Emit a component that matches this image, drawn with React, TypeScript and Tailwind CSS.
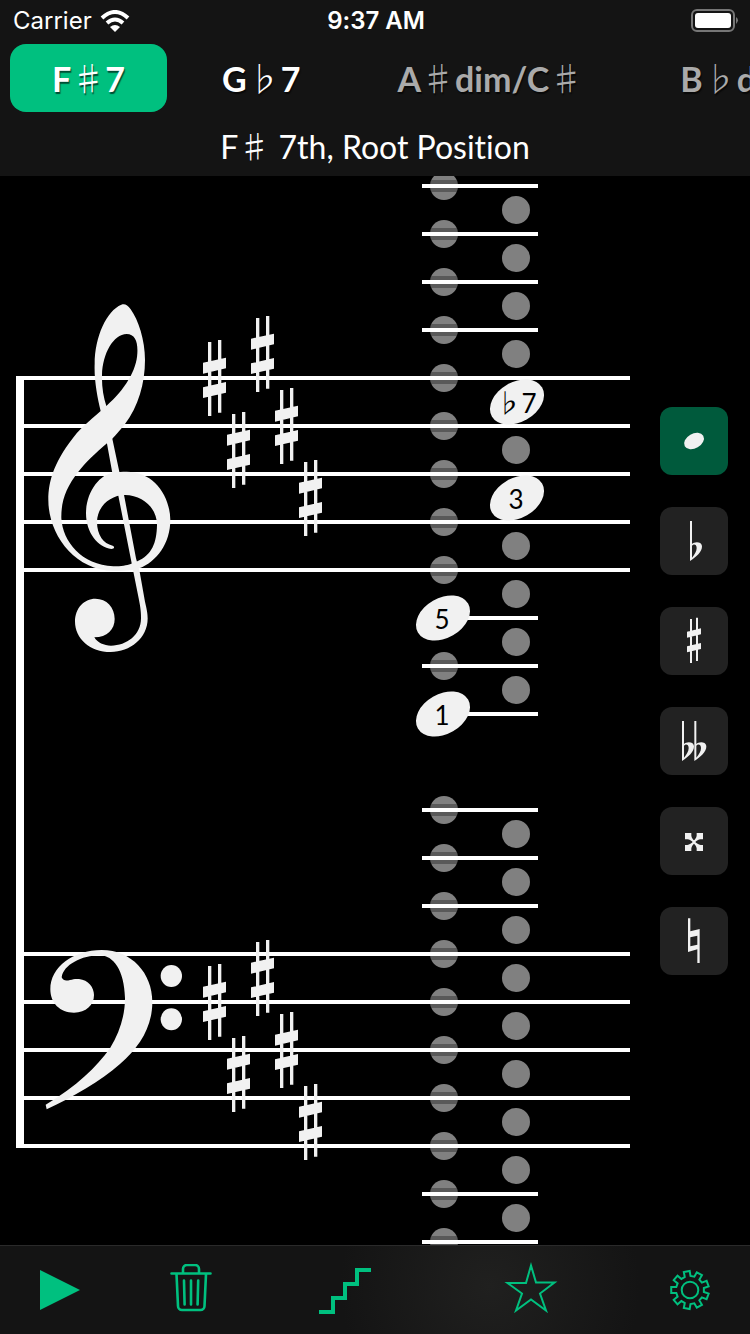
import { useState } from 'react';
import type { ReactNode } from 'react';

const CHORDS = [
  { name: 'F♯7', dimmed: false },
  { name: 'G♭7', dimmed: false },
  { name: 'A♯dim/C♯', dimmed: true },
  { name: 'B♭dim/D♭', dimmed: true },
];

// Canvas geometry: one staff step is half a line gap
const LINE_GAP = 48;
const TREBLE_TOP = 202;
const BASS_TOP = 778;

const STAFF_LINES = [0, 1, 2, 3, 4].flatMap((i) => [TREBLE_TOP + i * LINE_GAP, BASS_TOP + i * LINE_GAP]);
const LEDGER_LINES = [10, 58, 106, 154, 442, 490, 538, 634, 682, 730, 1018, 1066];

const LINE_DOTS = [
  10, 58, 106, 154, 202, 250, 298, 346, 394, 490, 634, 682, 730, 778, 826, 874, 922, 970, 1018, 1066,
];
const SPACE_DOTS = [34, 82, 130, 178, 274, 370, 418, 466, 514, 658, 706, 754, 802, 850, 898, 946, 994, 1042];

const NOTES = [
  { label: '♭7', x: 517, y: 226 },
  { label: '3', x: 517, y: 322 },
  { label: '5', x: 443, y: 442 },
  { label: '1', x: 443, y: 538 },
];

const KEY_SHARPS = [
  { x: 203, y: 164 },
  { x: 227, y: 236 },
  { x: 251, y: 140 },
  { x: 275, y: 212 },
  { x: 299, y: 284 },
];

// Splits out the accidentals, they are set in a lighter and wider face
function ChordText({ text }: { text: string }) {
  return (
    <>
      {text.split(/([♯♭])/).map((part, i) =>
        part === '♯' || part === '♭' ? (
          <span key={i} className="font-['Noto_Sans_CJK_JP',sans-serif] font-light leading-none">
            {part}
          </span>
        ) : (
          part
        )
      )}
    </>
  );
}

function TrebleClef() {
  return (
    <svg x="10" y="114" width="200" height="380" viewBox="0 0 600 1140" fill="#f1f1f1">
      <path
        fillRule="evenodd"
        d="M272 363C262 320 252 270 254 222C254 140 290 62 334 44C344 40 352 44 362 58C385 90 405 150 405 210C405 280 385 350 345 402C335 415 320 432 306 447L291 460C255 490 225 520 205 545C170 590 153 630 154 685C158 755 215 825 310 829C335 829 350 826 362 822L382 814C425 795 440 760 441 705C441 655 400 616 345 615C300 615 262 650 261 695C261 735 280 760 308 767C315 770 313 777 304 777C265 772 228 730 228 670C228 605 270 552 310 549C325 546 335 545 350 545C430 545 480 615 481 690C481 760 440 815 388 835C370 841 340 844 310 843C190 840 115 730 115 630C115 570 135 510 200 430C225 402 250 383 272 363ZM289 348C280 320 275 290 276 255C278 190 310 133 350 132C375 132 384 155 382 190C380 240 345 300 289 348Z"
      />
      <path d="M289 450L306 442L328 545L344 625L378 805L389 845L405 935C412 965 413 975 413 985C413 1045 360 1086 302 1086C240 1086 195 1045 195 995C195 955 222 926 256 926C290 926 314 952 314 987C314 1018 292 1042 253 1042C262 1058 282 1067 303 1067C350 1067 393 1035 393 985C393 960 390 945 384 915L369 840L325 617L307 549Z" />
    </svg>
  );
}

function BassClef() {
  return (
    <svg x="10" y="754" width="200" height="230" viewBox="0 0 600 690" fill="#f1f1f1">
      <path d="M107 524C200 470 260 410 300 355C330 305 345 255 345 205C343 120 310 77 270 76C215 76 160 105 155 142C160 155 172 152 180 150C190 147 197 146 207 147C235 150 252 172 252 195C252 225 228 248 192 248C150 248 121 220 121 178C121 110 190 61 275 60C365 60 427 130 427 215C427 290 390 350 330 402C270 455 190 500 110 538Z" />
      <ellipse cx="484" cy="138" rx="32" ry="33" />
      <ellipse cx="484" cy="268" rx="32" ry="33" />
    </svg>
  );
}

function KeySharp({ x, y }: { x: number; y: number }) {
  return (
    <svg x={x} y={y} width="24" height="76" viewBox="0 0 72 228" fill="#f1f1f1">
      <path d="M15 6h10v222h-10zM45 0h10v218h-10zM0 68L69 53V85L0 101zM0 142L69 126V158L0 174z" />
    </svg>
  );
}

function StaffCanvas() {
  return (
    <svg viewBox="0 0 640 1069" className="block min-w-0 flex-1" role="img" aria-label="Grand staff">
      {[...LINE_DOTS.map((y) => ({ x: 444, y })), ...SPACE_DOTS.map((y) => ({ x: 516, y }))].map((dot) => (
        <circle key={`${dot.x}-${dot.y}`} cx={dot.x} cy={dot.y} r="14" fill="#808080" />
      ))}
      {LINE_DOTS.map((y) => (
        <rect key={y} x="430" y={y - 6} width="28" height="12" fill="#000" fillOpacity="0.3" />
      ))}

      <rect x="16" y="200" width="8" height="772" fill="#fff" />
      {STAFF_LINES.map((y) => (
        <rect key={y} x="16" y={y - 2} width="614" height="4" fill="#fff" />
      ))}
      {LEDGER_LINES.map((y) => (
        <rect key={y} x="422" y={y - 2} width="116" height="4" fill="#fff" />
      ))}

      <TrebleClef />
      <BassClef />
      {KEY_SHARPS.map(({ x, y }) => (
        <g key={x}>
          <KeySharp x={x} y={y} />
          <KeySharp x={x} y={y + 624} />
        </g>
      ))}

      {NOTES.map((note) => (
        <g key={note.label}>
          <ellipse
            cx={note.x}
            cy={note.y}
            rx="29"
            ry="20"
            fill="#f1f1f1"
            transform={`rotate(-30 ${note.x} ${note.y})`}
          />
          <text
            x={note.x - 1}
            y={note.y + 11}
            textAnchor="middle"
            className="fill-black font-['Lato','Noto_Sans_CJK_JP',sans-serif] text-[26px]"
          >
            {note.label}
          </text>
        </g>
      ))}
    </svg>
  );
}

const FLAT =
  'M90 42h6V111C102 104 124 102 126 117C127 135 108 150 90 162zM96 116V152C104 142 110 133 110 123C110 112 101 110 96 116z';

const TOOLS: { id: string; icon: ReactNode }[] = [
  { id: 'Note', icon: <ellipse cx="102" cy="102" rx="32" ry="22" transform="rotate(-30 102 102)" /> },
  { id: 'Flat', icon: <path fillRule="evenodd" d={FLAT} /> },
  {
    id: 'Sharp',
    icon: <path d="M90 36h6v132h-6zM108 32h6v130h-6zM81 74L123 64V82L81 92zM81 118L123 108V126L81 136z" />,
  },
  {
    id: 'Double flat',
    icon: (
      <>
        <path fillRule="evenodd" d={FLAT} transform="translate(-24 0)" />
        <path fillRule="evenodd" d={FLAT} transform="translate(13 0)" />
      </>
    ),
  },
  {
    id: 'Double sharp',
    icon: (
      <path d="M75 78H94V86C95 92 98 96 102 100C106 96 109 92 110 86V78H129V97H122C115 98 110 101 106 105C110 109 115 113 122 114H129V132H110V124C109 118 106 114 102 110C98 114 95 118 94 124V132H75V114H82C89 113 94 109 98 105C94 101 89 98 82 97H75z" />
    ),
  },
  {
    id: 'Natural',
    icon: (
      <path
        fillRule="evenodd"
        d="M84 34H91V73L119 66V168H112V127L84 135zM91 91V118L112 113V86z"
      />
    ),
  },
];

// Nine-tooth cog, traced clockwise around a 44x44 box
const GEAR_POINTS = Array.from({ length: 9 }, (_, i) => {
  const base = 180 + i * 40;
  return [
    [-12, 14],
    [-9, 19],
    [9, 19],
    [12, 14],
  ].map(([offset, radius]) => {
    const angle = ((base + offset) * Math.PI) / 180;
    return `${(22 + radius * Math.cos(angle)).toFixed(2)},${(22 + radius * Math.sin(angle)).toFixed(2)}`;
  });
})
  .flat()
  .join(' ');

const ACTIONS: { id: string; icon: ReactNode }[] = [
  {
    id: 'Play',
    icon: (
      <svg width="40" height="40" viewBox="0 0 40 40" fill="currentColor">
        <path d="M0 0L40 20L0 40z" />
      </svg>
    ),
  },
  {
    id: 'Clear',
    icon: (
      <svg width="42" height="52" viewBox="0 0 42 52" fill="none" stroke="currentColor" strokeWidth="2.6" strokeLinecap="round">
        <path d="M1.5 9.5h39M13 9V5a4 4 0 0 1 4-4h8a4 4 0 0 1 4 4v4M6.5 10l1.5 32a4 4 0 0 0 4 4h18.500a4 4 0 0 0 4-4l1.5-32" />
        <path d="M14 16.500l.6 24M21 16.500v24M28.200 16.500l-.6 24" />
      </svg>
    ),
  },
  {
    id: 'Inversions',
    icon: (
      <svg width="52" height="48" viewBox="0 0 52 48" fill="none" stroke="currentColor" strokeWidth="4">
        <path d="M0 46H14V32H26V18H38V4H52" />
      </svg>
    ),
  },
  {
    id: 'Favorites',
    icon: (
      <svg
        className="overflow-visible"
        width="56"
        height="52"
        viewBox="0 0 56 52"
        fill="none"
        stroke="currentColor"
        strokeWidth="2"
      >
        <path d="M28 1.500L33 18.500H51.500L37 29.500L43 46.500L28 35.500L13 46.500L19 29.500L4.500 19H23z" />
      </svg>
    ),
  },
  {
    id: 'Settings',
    icon: (
      <svg width="44" height="44" viewBox="0 0 44 44" fill="none" stroke="currentColor" strokeWidth="2">
        <polygon points={GEAR_POINTS} />
        <circle cx="22" cy="22" r="8.300" />
      </svg>
    ),
  },
];

function StatusBar() {
  return (
    <div className="grid h-10 grid-cols-3 items-center pt-px pr-[11px] pl-[13px] font-['Inter',sans-serif] text-2xl text-white">
      <div className="flex items-center gap-2">
        <span>Carrier</span>
        <svg width="30" height="22" viewBox="0 0 30 22" fill="none" stroke="#fff" strokeWidth="4">
          <path d="M2 8Q15 -4 28 8" />
          <path d="M7 13Q15 6 23 13" />
          <path d="M15 22L10 17Q15 13 20 17z" fill="#fff" stroke="none" />
        </svg>
      </div>
      <span className="text-center font-semibold">9:37 AM</span>
      <svg className="justify-self-end" width="48" height="24" viewBox="0 0 48 24" fill="none">
        <rect x="1" y="1" width="42" height="21" rx="5" stroke="#767676" strokeWidth="2" />
        <rect x="4" y="4" width="36" height="15" rx="3" fill="#fff" />
        <path d="M45 8Q49 11 45 15z" fill="#767676" />
      </svg>
    </div>
  );
}

export default function App() {
  const [chord, setChord] = useState('F♯7');
  const [tool, setTool] = useState('Note');

  return (
    <div className="flex min-h-screen flex-col overflow-x-hidden bg-black font-['Lato',sans-serif] [font-variant-ligatures:none]">
      <header className="bg-[#141414]">
        <StatusBar />
        <nav className="flex gap-[13px] overflow-hidden px-[10px] pt-1">
          {CHORDS.map(({ name, dimmed }) => (
            <button
              key={name}
              onClick={() => setChord(name)}
              className={`h-[68px] flex-none rounded-2xl px-[42px] text-[34px] font-bold leading-none whitespace-nowrap [text-shadow:1px_2px_1px_rgba(0,0,0,0.6)] ${
                chord === name ? 'bg-[#00c07f]' : ''
              } ${dimmed ? 'text-[#aaaaaa]' : 'text-white'}`}
            >
              <ChordText text={name} />
            </button>
          ))}
        </nav>
        <h1 className="h-16 pt-3 text-center text-[32px] leading-[46px] text-white">
          <ChordText text="F♯ 7th, Root Position" />
        </h1>
      </header>

      <main className="flex flex-1 items-start">
        <StaffCanvas />
        <aside className="flex w-[110px] flex-none flex-col gap-8 pt-[231px] pl-5">
          {TOOLS.map(({ id, icon }) => (
            <button
              key={id}
              aria-label={id}
              onClick={() => setTool(id)}
              className={`size-[68px] rounded-xl ${tool === id ? 'bg-[#005a3c]' : 'bg-[#222222]'}`}
            >
              <svg viewBox="0 0 204 204" className="size-full" fill="#f1f1f1">
                {icon}
              </svg>
            </button>
          ))}
        </aside>
      </main>

      <footer className="grid h-[89px] grid-cols-[120fr_142fr_166fr_206fr_112fr] items-center border-t border-[#2a2a2a] bg-[#141414] bg-[radial-gradient(circle_at_490px_40px,#20201f,#141414_150px)] pr-1 text-[#00c07f]">
        {ACTIONS.map(({ id, icon }) => (
          <button key={id} aria-label={id} className="flex h-full items-center justify-center">
            {icon}
          </button>
        ))}
      </footer>
    </div>
  );
}
